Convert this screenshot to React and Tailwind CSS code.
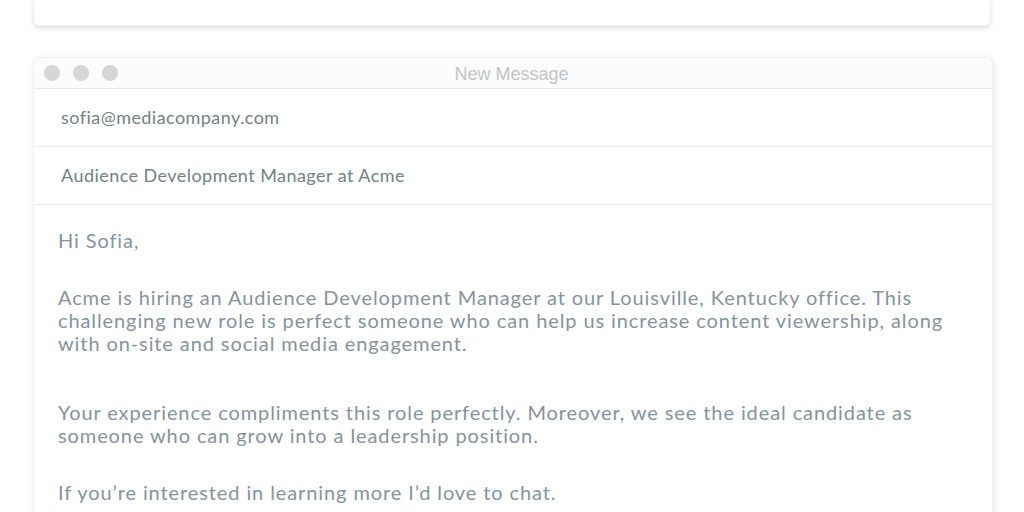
import React from 'react';

const paragraphs = [
  { text: 'Acme is hiring an Audience Development Manager at our Louisville, Kentucky office. This challenging new role is perfect someone who can help us increase content viewership, along with on-site and social media engagement.', gap: 'mb-[46px]' },
  { text: 'Your experience compliments this role perfectly. Moreover, we see the ideal candidate as someone who can grow into a leadership position.', gap: 'mb-[34px]' },
  { text: 'If you’re interested in learning more I’d love to chat.', gap: '' },
];

function Field({ children }) {
  return (
    <div className="h-[58px] flex items-center pl-[27px] border-b border-[#ececec] text-[18px] tracking-[0.45px] text-[#757f88]">
      {children}
    </div>
  );
}

export default function App() {
  return (
    <div className="w-[1024px] h-[512px] overflow-hidden bg-white font-['Lato',sans-serif]">
      <div className="ml-[33px] w-[958px] h-[26px] bg-white rounded-b-md border border-t-0 border-[#eeeeee] shadow-[0_3px_5px_rgba(0,0,0,0.10)]" />

      <div className="mt-[31px] ml-[33px] w-[960px] bg-white rounded-t-md border border-[#efefef] shadow-[2px_2px_8px_rgba(0,0,0,0.08)]">
        <div className="relative h-[31px] flex items-center pl-[10px] bg-[#fcfcfc] rounded-t-md border-b border-[#ececec]">
          <div className="flex gap-[13px]">
            <span className="w-[16px] h-[16px] rounded-full bg-[#d6d6d6]" />
            <span className="w-[16px] h-[16px] rounded-full bg-[#d6d6d6]" />
            <span className="w-[16px] h-[16px] rounded-full bg-[#d6d6d6]" />
          </div>
          <div className="absolute inset-0 flex items-center justify-center pt-[3px] pr-[3px] font-['Liberation_Sans',sans-serif] text-[18px] text-[#c4c4c4]">
            New Message
          </div>
        </div>

        <Field>sofia@mediacompany.com</Field>
        <Field>Audience Development Manager at Acme</Field>

        <div className="pl-[24px] pr-[38px] pt-[24px] pb-[40px] text-[20px] tracking-[0.9px] leading-[23px] text-[#86939d]">
          <p className="mb-[34px]">Hi Sofia,</p>
          {paragraphs.map((p, i) => (
            <p key={i} className={p.gap}>{p.text}</p>
          ))}
        </div>
      </div>
    </div>
  );
}
